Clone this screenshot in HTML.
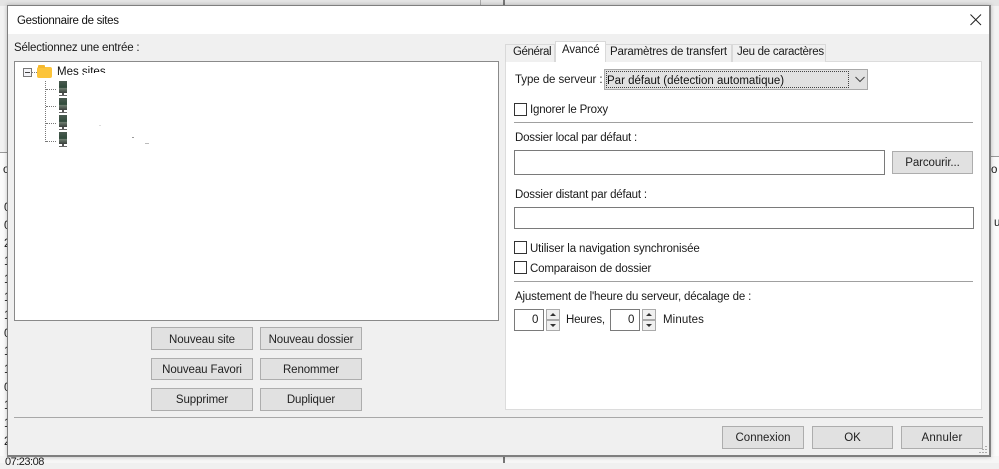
<!DOCTYPE html>
<html><head><meta charset="utf-8">
<style>
html,body{margin:0;padding:0}
body{width:999px;height:463px;overflow:hidden;position:relative;background:#f0f0f0;font-family:"Liberation Sans",sans-serif;font-size:11.5px;color:#1a1a1a}
div,span{position:absolute;box-sizing:border-box}
.t{white-space:nowrap;line-height:14px}
.btn{background:#e1e1e1;border:1px solid #adadad;text-align:center;line-height:22px;white-space:nowrap;color:#222;letter-spacing:-.1px}
.inp{background:#fff;border:1px solid #7a7a7a}
.cb{width:13px;height:13px;background:#fff;border:1px solid #333}
.sep{height:1px;background:#a0a0a0}
.srv{width:8px;height:12px;background:linear-gradient(#4a5a50,#2f4a3a 55%,#6e7e70 60%,#3a403c);}
.srv:before{content:"";position:absolute;left:3px;top:12px;width:2px;height:2px;background:#555}
.srv:after{content:"";position:absolute;left:0;top:14px;width:8px;height:1px;background:#666}
.dv{border-left:1px dotted #777;width:0}
.dh{border-top:1px dotted #777;height:0}
.g{width:2px;height:1px;background:#aaa}
</style></head><body>
<!-- background window -->
<div style="left:0;top:0;width:999px;height:6px;background:#e4e4e4"></div>
<div style="left:503px;top:0;width:2px;height:6px;background:#777"></div>
<div style="left:480px;top:0;width:1px;height:6px;background:#aaa"></div>
<div style="left:0;top:6px;width:7px;height:146px;background:#f2f2f2"></div>
<div style="left:0;top:152px;width:7px;height:1px;background:#999"></div>
<div style="left:0;top:153px;width:7px;height:310px;background:#fbfbfb"></div>
<div style="left:990px;top:6px;width:9px;height:150px;background:#f2f2f2"></div>
<div style="left:990px;top:156px;width:9px;height:1px;background:#999"></div>
<div style="left:990px;top:157px;width:9px;height:306px;background:#fbfbfb"></div>
<div style="left:0;top:456px;width:999px;height:7px;background:#f6f6f6"></div>
<div style="left:503px;top:456px;width:2px;height:7px;background:#777"></div>
<span class="t" style="left:3px;top:163px">o</span>
<span class="t" style="left:4px;top:201px">0</span>
<span class="t" style="left:4px;top:219px">0</span>
<span class="t" style="left:4px;top:237px">2</span>
<span class="t" style="left:4px;top:255px">1</span>
<span class="t" style="left:4px;top:273px">1</span>
<span class="t" style="left:4px;top:291px">1</span>
<span class="t" style="left:4px;top:309px">1</span>
<span class="t" style="left:4px;top:327px">0</span>
<span class="t" style="left:4px;top:345px">1</span>
<span class="t" style="left:4px;top:363px">1</span>
<span class="t" style="left:4px;top:381px">0</span>
<span class="t" style="left:4px;top:399px">1</span>
<span class="t" style="left:4px;top:417px">1</span>
<span class="t" style="left:4px;top:435px">2</span>
<span class="t" style="left:5px;top:455px;font-size:11px;letter-spacing:-.5px">07:23:08</span>
<span class="t" style="left:991px;top:163px">o</span>
<span class="t" style="left:994px;top:216px">u</span>
<!-- dialog -->
<div style="left:7px;top:5px;width:984px;height:452px;background:#f0f0f0;border:1px solid #7f7f7f;border-width:1px 2px 2px 1px;box-shadow:0 0 4px rgba(0,0,0,.25)"></div>
<div style="left:8px;top:6px;width:981px;height:28px;background:#fff"></div>
<span class="t" style="left:17px;top:14px;letter-spacing:-.3px;color:#111">Gestionnaire de sites</span>
<svg style="position:absolute;left:970px;top:14px" width="12" height="12" viewBox="0 0 12 12"><path d="M.5.5l10.5 10.5M11 .5L.5 11" stroke="#222" stroke-width="1" fill="none"/></svg>
<span class="t" style="left:14px;top:41px;letter-spacing:-.2px">Sélectionnez une entrée :</span>
<!-- tree -->
<div style="left:14px;top:61px;width:485px;height:260px;background:#fff;border:1px solid #8a8a8a"></div>
<div style="left:23px;top:68px;width:9px;height:9px;border:1px solid #777;background:#f4f4f8"></div>
<div style="left:25px;top:72px;width:5px;height:1px;background:#444"></div>
<div class="dh" style="left:32px;top:72px;width:5px"></div>
<div style="left:37px;top:67px;width:15px;height:11px;background:#fcc43a;border-radius:2px"></div>
<div style="left:38px;top:65px;width:7px;height:3px;background:#f5b82e;border-radius:1px 1px 0 0"></div>
<span class="t" style="left:57px;top:65px;height:14px;overflow:hidden;color:#111">Mes sites</span>
<div style="left:84px;top:73px;width:30px;height:8px;background:#fff"></div>
<div class="dv" style="left:45px;top:81px;height:61px"></div>
<div class="dh" style="left:46px;top:89px;width:10px"></div>
<div class="dh" style="left:46px;top:106px;width:10px"></div>
<div class="dh" style="left:46px;top:123px;width:10px"></div>
<div class="dh" style="left:46px;top:141px;width:10px"></div>
<div class="srv" style="left:59px;top:81px"></div>
<div class="srv" style="left:59px;top:98px"></div>
<div class="srv" style="left:59px;top:115px"></div>
<div class="srv" style="left:59px;top:132px"></div>
<div style="left:99px;top:125px;width:2px;height:1px;background:#ddd"></div>
<div style="left:132px;top:137px;width:2px;height:1px;background:#999"></div>
<div style="left:145px;top:143px;width:4px;height:1px;background:#bbb"></div>
<!-- left buttons -->
<div class="btn" style="left:151px;top:327px;width:102px;height:23px;line-height:24px">Nouveau site</div>
<div class="btn" style="left:260px;top:327px;width:102px;height:23px;line-height:24px">Nouveau dossier</div>
<div class="btn" style="left:151px;top:358px;width:102px;height:22px">Nouveau Favori</div>
<div class="btn" style="left:260px;top:358px;width:102px;height:22px">Renommer</div>
<div class="btn" style="left:151px;top:388px;width:102px;height:23px">Supprimer</div>
<div class="btn" style="left:260px;top:388px;width:102px;height:23px">Dupliquer</div>
<!-- tabs -->
<div style="left:505px;top:61px;width:477px;height:349px;background:#fff;border:1px solid #dcdcdc"></div>
<div style="left:505px;top:44px;width:50px;height:18px;background:#f0f0f0;border:1px solid #d9d9d9;border-bottom:0"></div>
<div style="left:605px;top:44px;width:127px;height:18px;background:#f0f0f0;border:1px solid #d9d9d9;border-bottom:0"></div>
<div style="left:732px;top:44px;width:94px;height:18px;background:#f0f0f0;border:1px solid #d9d9d9;border-bottom:0"></div>
<div style="left:555px;top:41px;width:51px;height:21px;background:#fff;border:1px solid #d9d9d9;border-bottom:0"></div>
<span class="t" style="left:513px;top:45px;letter-spacing:-.4px">Général</span>
<span class="t" style="left:562px;top:43px;letter-spacing:-.1px">Avancé</span>
<span class="t" style="left:610px;top:45px;letter-spacing:-.17px">Paramètres de transfert</span>
<span class="t" style="left:737px;top:45px;letter-spacing:-.27px">Jeu de caractères</span>
<!-- panel content -->
<span class="t" style="left:515px;top:73px;letter-spacing:-.08px">Type de serveur :</span>
<div style="left:604px;top:69px;width:264px;height:21px;background:#e1e1e1;border:1px solid #a9a9a9"></div>
<div style="left:606px;top:71px;width:243px;height:17px;border:1px dotted #444"></div>
<span class="t" style="left:607px;top:74px;color:#111">Par défaut (détection automatique)</span>
<svg style="position:absolute;left:855px;top:76px" width="10" height="7" viewBox="0 0 10 7"><path d="M.5 1l4.5 4.5L9.5 1" stroke="#444" fill="none"/></svg>
<div class="cb" style="left:514px;top:103px"></div>
<span class="t" style="left:530px;top:103px;letter-spacing:-.2px">Ignorer le Proxy</span>
<div class="sep" style="left:514px;top:122px;width:459px"></div>
<span class="t" style="left:515px;top:131px;letter-spacing:-.2px">Dossier local par défaut :</span>
<div class="inp" style="left:514px;top:150px;width:371px;height:25px"></div>
<div class="btn" style="left:892px;top:151px;width:81px;height:23px">Parcourir...</div>
<span class="t" style="left:515px;top:188px;letter-spacing:-.2px">Dossier distant par défaut :</span>
<div class="inp" style="left:514px;top:207px;width:460px;height:22px"></div>
<div class="cb" style="left:514px;top:241px"></div>
<span class="t" style="left:530px;top:242px;letter-spacing:-.12px">Utiliser la navigation synchronisée</span>
<div class="cb" style="left:514px;top:261px"></div>
<span class="t" style="left:530px;top:262px;letter-spacing:-.16px">Comparaison de dossier</span>
<div class="sep" style="left:514px;top:281px;width:459px"></div>
<span class="t" style="left:515px;top:290px;letter-spacing:-.15px">Ajustement de l'heure du serveur, décalage de :</span>
<div class="inp" style="left:514px;top:309px;width:30px;height:22px"></div>
<span class="t" style="left:532px;top:313px">0</span>
<div style="left:546px;top:309px;width:14px;height:11px;background:#f0f0f0;border:1px solid #aaa"></div>
<div style="left:546px;top:320px;width:14px;height:11px;background:#f0f0f0;border:1px solid #aaa"></div>
<svg style="position:absolute;left:549px;top:312px" width="8" height="16" viewBox="0 0 8 16"><path d="M4 1L7 4H1zM1 12h6l-3 3z" fill="#333"/></svg>
<span class="t" style="left:566px;top:313px;letter-spacing:-.2px">Heures,</span>
<div class="inp" style="left:610px;top:309px;width:30px;height:22px"></div>
<span class="t" style="left:628px;top:313px">0</span>
<div style="left:642px;top:309px;width:14px;height:11px;background:#f0f0f0;border:1px solid #aaa"></div>
<div style="left:642px;top:320px;width:14px;height:11px;background:#f0f0f0;border:1px solid #aaa"></div>
<svg style="position:absolute;left:645px;top:312px" width="8" height="16" viewBox="0 0 8 16"><path d="M4 1L7 4H1zM1 12h6l-3 3z" fill="#333"/></svg>
<span class="t" style="left:663px;top:313px;letter-spacing:.1px">Minutes</span>
<!-- bottom -->
<div style="left:14px;top:417px;width:969px;height:1px;background:#a8a8a8"></div>
<div class="btn" style="left:722px;top:426px;width:82px;height:23px;letter-spacing:0">Connexion</div>
<div class="btn" style="left:812px;top:426px;width:81px;height:23px">OK</div>
<div class="btn" style="left:901px;top:426px;width:82px;height:23px;letter-spacing:.2px">Annuler</div>
<!-- grip -->
<div class="g" style="left:985px;top:446px"></div>
<div class="g" style="left:985px;top:449px"></div>
<div class="g" style="left:985px;top:452px"></div>
<div class="g" style="left:982px;top:449px"></div>
<div class="g" style="left:982px;top:452px"></div>
<div class="g" style="left:979px;top:452px"></div>
</body></html>
